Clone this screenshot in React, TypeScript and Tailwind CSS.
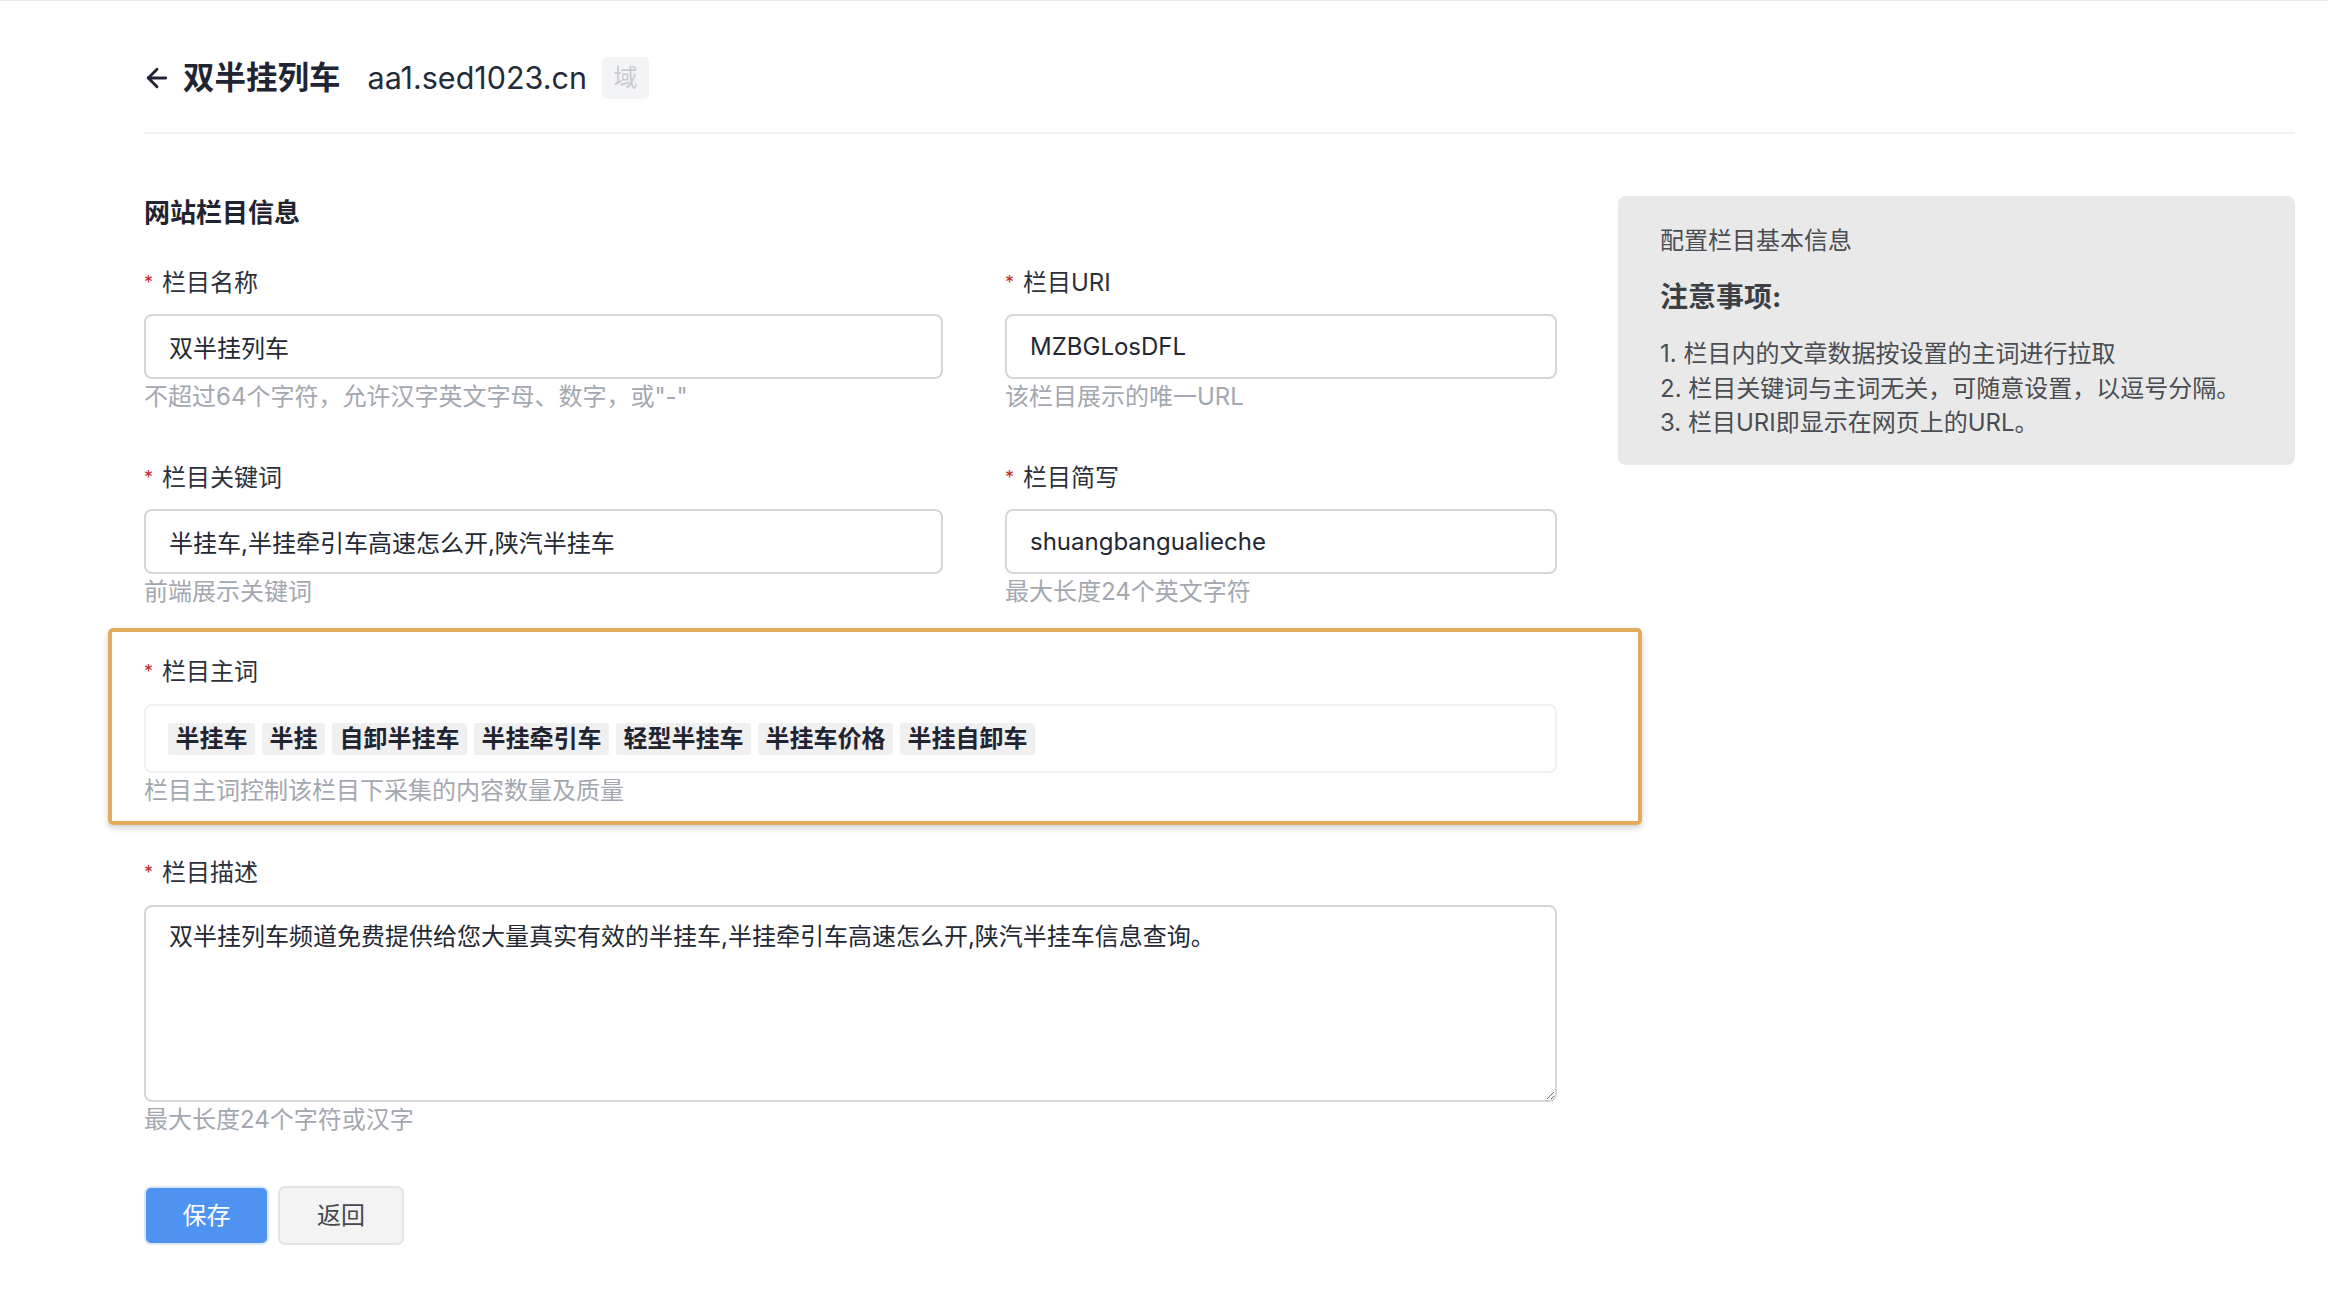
import type { ReactNode } from "react"
import { ArrowLeft } from "lucide-react"

const TAGS = ["半挂车", "半挂", "自卸半挂车", "半挂牵引车", "轻型半挂车", "半挂车价格", "半挂自卸车"]

const NOTES = [
  "1. 栏目内的文章数据按设置的主词进行拉取",
  "2. 栏目关键词与主词无关，可随意设置，以逗号分隔。",
  "3. 栏目URI即显示在网页上的URL。",
]

const FONT = { fontFamily: 'Inter, "Noto Sans CJK SC", sans-serif' }

function Label({ children }: { children: ReactNode }) {
  return (
    <div className="flex items-center h-[32px] text-[24px] leading-[32px] text-[#2c313b]">
      <span className="text-[#c0282d] text-[18px] w-[12px] mr-[6px] leading-none">*</span>
      {children}
    </div>
  )
}

function Help({ children }: { children: ReactNode }) {
  return <p className="mt-[2px] text-[24px] leading-[32px] text-[#a3a8b0]">{children}</p>
}

function TextField({ label, value, help }: { label: string; value: string; help: string }) {
  return (
    <div>
      <Label>{label}</Label>
      <input
        type="text"
        defaultValue={value}
        className="mt-[15px] w-full h-[65px] rounded-[8px] border-2 border-[#d3d6db] bg-white px-[23px] text-[24px] text-[#232833] outline-none"
      />
      <Help>{help}</Help>
    </div>
  )
}

export default function App() {
  return (
    <div className="min-h-screen bg-white border-t border-[#e6e6e6]" style={FONT}>
      <div className="pl-[144px] pr-[33px]">
        {/* header */}
        <div className="flex items-center pt-[56px] pb-[33px] border-b-2 border-[#f0f1f3]">
          <ArrowLeft className="w-[30px] h-[30px] -ml-[2px] text-[#1f2430]" strokeWidth={2.3} />
          <h1 className="ml-[11px] text-[31.5px] leading-[40px] font-semibold text-[#1f2533]">双半挂列车</h1>
          <span className="ml-[27px] text-[30.5px] leading-[40px] text-[#262b38]">aa1.sed1023.cn</span>
          <span className="ml-[15px] w-[47px] h-[42px] rounded-[5px] bg-[#f3f4f6] flex items-center justify-center text-[24px] text-[#c9cbd0]">
            域
          </span>
        </div>

        <div className="flex pt-[61px] pb-[40px]">
          {/* form */}
          <div className="w-[1413px]">
            <h2 className="text-[26px] leading-[36px] font-bold text-[#1f2430]">网站栏目信息</h2>

            <div className="mt-[36px] grid grid-cols-[799px_552px] gap-x-[62px] gap-y-[49px]">
              <TextField label="栏目名称" value="双半挂列车" help={'不超过64个字符，允许汉字英文字母、数字，或"-"'} />
              <TextField label="栏目URI" value="MZBGLosDFL" help="该栏目展示的唯一URL" />
              <TextField label="栏目关键词" value="半挂车,半挂牵引车高速怎么开,陕汽半挂车" help="前端展示关键词" />
              <TextField label="栏目简写" value="shuangbangualieche" help="最大长度24个英文字符" />
            </div>

            {/* main words, highlighted */}
            <div className="relative mt-[48px]">
              <div className="absolute -left-[36px] -right-[85px] -top-[28px] -bottom-[18px] rounded-[5px] border-[4px] border-[#e2ab5e] shadow-[0_3px_6px_rgba(0,0,0,0.18)] pointer-events-none" />
              <Label>栏目主词</Label>
              <div className="mt-[16px] h-[69px] rounded-[8px] border-2 border-[#eef0f2] bg-white flex items-center gap-[7px] px-[22px]">
                {TAGS.map((tag) => (
                  <span
                    key={tag}
                    className="h-[32px] px-[7.5px] rounded-[3px] bg-[#f0f0f1] text-[24px] leading-[32px] font-bold text-[#1f2430]"
                  >
                    {tag}
                  </span>
                ))}
              </div>
              <Help>栏目主词控制该栏目下采集的内容数量及质量</Help>
            </div>

            <div className="mt-[50px]">
              <Label>栏目描述</Label>
              <textarea
                defaultValue="双半挂列车频道免费提供给您大量真实有效的半挂车,半挂牵引车高速怎么开,陕汽半挂车信息查询。"
                className="block mt-[16px] w-full h-[197px] rounded-[8px] border-2 border-[#d3d6db] bg-white px-[23px] py-[14px] text-[24px] leading-[32px] text-[#232833] outline-none"
              />
              <Help>最大长度24个字符或汉字</Help>
            </div>

            <div className="mt-[50px] flex gap-[9px]">
              <button
                type="button"
                className="w-[125px] h-[59px] rounded-[7px] bg-[#4f93f2] border-2 border-[#dce8f8] text-[24px] text-white"
              >
                保存
              </button>
              <button
                type="button"
                className="w-[126px] h-[59px] rounded-[7px] bg-[#f3f3f3] border-2 border-[#e4e4e4] text-[24px] text-[#444850]"
              >
                返回
              </button>
            </div>
          </div>

          {/* tips panel */}
          <aside className="ml-[61px] mt-[1px] w-[677px] h-[269px] rounded-[8px] bg-[#e9e9e9] pl-[42px] pr-[20px] pt-[28px] text-[#4a4d52]">
            <p className="text-[24px] leading-[34px]">配置栏目基本信息</p>
            <p className="mt-[20px] text-[28px] leading-[38px] font-bold text-[#3c3f44]">注意事项:</p>
            <ul className="mt-[21px] text-[24px] leading-[34.5px]">
              {NOTES.map((n) => (
                <li key={n}>{n}</li>
              ))}
            </ul>
          </aside>
        </div>
      </div>
    </div>
  )
}
